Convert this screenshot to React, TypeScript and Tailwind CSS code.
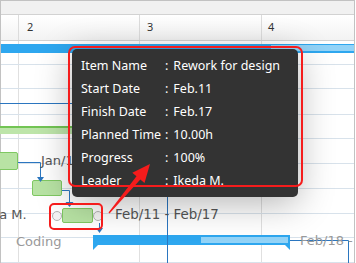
import React from "react";

const rowHeights = [
  "h-[26px]",
  "h-[27px]",
  "h-[28px]",
  "h-[27px]",
  "h-[27px]",
  "h-[28px]",
  "h-[27px]",
  "h-[27px]",
  "h-[27px]",
];

const details: [string, string][] = [
  ["Item Name", "Rework for design"],
  ["Start Date", "Feb.11"],
  ["Finish Date", "Feb.17"],
  ["Planned Time", "10.00h"],
  ["Progress", "100%"],
  ["Leader", "Ikeda M."],
];

const GridRow = ({ h }: { h: string }) => (
  <div className={`flex border-b border-[#d8e2eb] ${h}`}>
    <div className="w-[18px] border-r border-[#e0e0e0]" />
    <div className="w-[121px] border-r border-[#e0e0e0]" />
    <div className="w-[122px] border-r border-[#e0e0e0]" />
    <div className="flex-1" />
  </div>
);

export default function App() {
  return (
    <div className="relative w-[356px] h-[263px] overflow-hidden bg-white font-['DejaVu_Sans',sans-serif]">
      {/* timeline grid */}
      <div className="flex flex-col w-[355px] h-[263px] border-l border-t border-r border-[#c2c2c2]">
        <div className="h-[14px] shrink-0 bg-[#f1f1f1] border-b border-[#d2d2d2]" />
        <div className="flex h-[26px] shrink-0 bg-gradient-to-b from-white to-[#f3f3f3] border-b border-[#d2d2d2] text-[11px] text-[#333] font-['Noto_Sans',sans-serif]">
          <div className="w-[18px] border-r border-[#dcdcdc]" />
          <div className="w-[121px] border-r border-[#dcdcdc] flex items-center pl-[8px]">2</div>
          <div className="w-[122px] border-r border-[#dcdcdc] flex items-center pl-[7px]">3</div>
          <div className="flex-1 flex items-center pl-[6px]">4</div>
        </div>
        {rowHeights.map((h, i) => (
          <GridRow key={i} h={h} />
        ))}
      </div>

      {/* project summary bar */}
      <div className="absolute left-[1px] top-[44px] w-[353px] h-[9px] flex">
        <div className="w-[270px] h-full bg-[#2ea7ef]" />
        <div className="flex-1 h-full bg-[#93d3f7] border-t border-b-2 border-[#2ea7ef]" />
      </div>

      {/* green summary */}
      <div className="absolute left-0 top-[126px] w-[170px] h-[8px] bg-[#bde5aa] border-t-2 border-[#72c453]" />

      {/* tasks */}
      <div className="absolute left-[-4px] top-[152px] w-[22px] h-[18px] rounded-[2px] bg-[#b8e3a4] border border-[#7fc862]" />
      <div className="absolute left-[32px] top-[180px] w-[30px] h-[16px] rounded-[2px] bg-[#b8e3a4] border border-[#7fc862]" />
      <div className="absolute left-[62px] top-[208px] w-[31px] h-[15px] rounded-[2px] bg-[#b8e3a4] border border-[#7fc862]" />
      <div className="absolute left-[52px] top-[211px] w-[10px] h-[10px] rounded-full bg-[#f5f5f5] border border-[#b4b4b4]" />
      <div className="absolute left-[93px] top-[211px] w-[10px] h-[10px] rounded-full bg-[#f5f5f5] border border-[#b4b4b4]" />

      {/* coding summary bar */}
      <div className="absolute left-[93px] top-[235px] w-[197px] h-[10px] flex border-2 border-[#2ea7ef] bg-[#93d3f7]">
        <div className="w-[106px] h-full bg-[#2ea7ef]" />
      </div>

      {/* connectors */}
      <svg className="absolute left-0 top-0" width="356" height="263" viewBox="0 0 356 263">
        <g stroke="#2b76c0" strokeWidth="1" fill="none">
          <path d="M0 103.5H167.5V263" />
          <path d="M18 162.5H40.5V177" />
          <path d="M62 190.5H69.5V202" />
          <path d="M99.5 223V228" />
          <path d="M290 240.5H348.5V263" />
        </g>
        <g fill="#2b76c0">
          <polygon points="37,177 44,177 40.5,182" />
          <polygon points="65.5,202 73.5,202 69.5,207" />
          <polygon points="96,228 103,228 99.5,233" />
        </g>
        <g fill="#2ea7ef">
          <polygon points="93,245 98,245 93,250" />
          <polygon points="285,245 290,245 290,250" />
        </g>
      </svg>

      {/* labels */}
      <div className="absolute left-[41px] top-[153px] text-[13px] leading-[16px] text-[#555] whitespace-nowrap">Jan/11 - Jan/31</div>
      <div className="absolute left-[-28px] top-[207px] text-[13px] leading-[16px] text-[#555] whitespace-nowrap">Ikeda M.</div>
      <div className="absolute left-[115px] top-[207px] text-[13.4px] leading-[16px] text-[#555] whitespace-nowrap">Feb/11 - Feb/17</div>
      <div className="absolute left-[16px] top-[234px] text-[13px] leading-[16px] text-[#999] whitespace-nowrap">Coding</div>
      <div className="absolute left-[300px] top-[233px] w-[54px] overflow-hidden text-[13px] leading-[16px] text-[#999] whitespace-nowrap">Feb/18 - Feb/28</div>

      {/* tooltip */}
      <div className="absolute left-[72px] top-[49px] w-[226px] h-[148px] rounded-[5px] bg-[#333333] pl-[9px] pt-[5px] text-[12.5px] leading-[23px] text-white font-['Noto_Sans',sans-serif] shadow-[0_6px_36px_rgba(0,0,0,0.3)]">
        {details.map(([k, v]) => (
          <div key={k} className="flex whitespace-nowrap">
            <span className="w-[84px]">{k}</span>
            <span>:</span>
            <span className="ml-[5px]">{v}</span>
          </div>
        ))}
      </div>

      {/* highlight marks */}
      <div className="absolute left-[68px] top-[46px] w-[235px] h-[141px] rounded-[7px] border-2 border-[#f51c1c]" />
      <div className="absolute left-[49px] top-[203px] w-[54px] h-[27px] rounded-[5px] border-2 border-[#f51c1c]" />
      <svg className="absolute left-0 top-0" width="356" height="263" viewBox="0 0 356 263">
        <polygon
          fill="#f51c1c"
          points="108.5,212.4 136.5,176.2 132.3,172.7 150,164 144.5,182.9 140.3,179.4 109.5,213.6"
        />
      </svg>
    </div>
  );
}
